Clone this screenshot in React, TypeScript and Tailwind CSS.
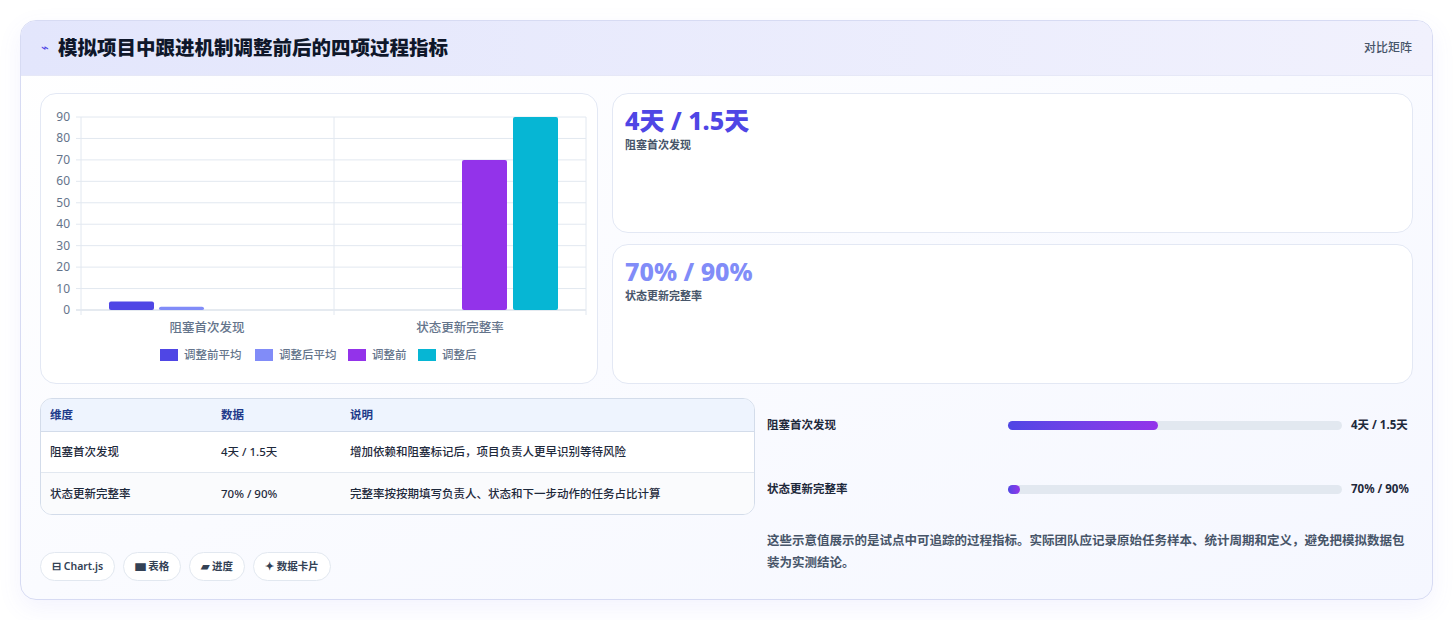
const font = { fontFamily: '"Noto Sans", "Noto Sans CJK SC", sans-serif' };

const ticks = [0, 10, 20, 30, 40, 50, 60, 70, 80, 90];
const y = (v: number) => 216 - (v / 90) * 193;

const bars = [
  { x: 68, v: 4, c: "#4f46e5" },
  { x: 118, v: 1.5, c: "#818cf8" },
  { x: 421, v: 70, c: "#9333ea" },
  { x: 472, v: 90, c: "#06b6d4" },
];

const legend = [
  { l: "调整前平均", c: "#4f46e5", x: 119 },
  { l: "调整后平均", c: "#818cf8", x: 214 },
  { l: "调整前", c: "#9333ea", x: 307 },
  { l: "调整后", c: "#06b6d4", x: 377 },
];

const Chart = () => (
  <svg width="557" height="290" className="block">
    {ticks.map((t) => (
      <g key={t}>
        <line x1="35" x2="545" y1={y(t)} y2={y(t)} stroke={t === 0 ? "#cbd5e1" : "#e2e8f0"} />
        <text x="29" y={y(t) + 4} textAnchor="end" fontSize="12" fill="#64748b">{t}</text>
      </g>
    ))}
    <line x1="40" x2="40" y1="23" y2="221" stroke="#e2e8f0" />
    <line x1="293" x2="293" y1="23" y2="221" stroke="#e2e8f0" />
    <line x1="545" x2="545" y1="23" y2="221" stroke="#e2e8f0" />
    {bars.map((b, i) => (
      <rect key={i} x={b.x} y={y(b.v)} width="45" height={216 - y(b.v)} rx="2" fill={b.c} />
    ))}
    <text x="166" y="238" textAnchor="middle" fontSize="12.5" fontWeight="500" fill="#64748b">阻塞首次发现</text>
    <text x="419" y="238" textAnchor="middle" fontSize="12.5" fontWeight="500" fill="#64748b">状态更新完整率</text>
    {legend.map((g) => (
      <g key={g.l}>
        <rect x={g.x} y="255" width="18" height="12" fill={g.c} />
        <text x={g.x + 24} y="265" fontSize="11.5" fontWeight="500" fill="#64748b">{g.l}</text>
      </g>
    ))}
  </svg>
);

const Stat = ({ v, l, c }: { v: string; l: string; c: string }) => (
  <div className="flex-1 rounded-2xl border border-[#e3e8f4] bg-white px-[12px] py-[9px]">
    <div className={`text-[25px] font-extrabold leading-[34px] ${c}`}>{v}</div>
    <div className="text-[11px] font-semibold text-[#475569]">{l}</div>
  </div>
);

const rows = [
  ["阻塞首次发现", "4天 / 1.5天", "增加依赖和阻塞标记后，项目负责人更早识别等待风险"],
  ["状态更新完整率", "70% / 90%", "完整率按按期填写负责人、状态和下一步动作的任务占比计算"],
];

export default function App() {
  return (
    <div style={font} className="w-[1453px] h-[620px] bg-white pt-5 pl-5">
      <div className="w-[1413px] h-[580px] rounded-2xl border border-[#d7dbf3] bg-gradient-to-br from-white to-[#f5f7ff] overflow-hidden shadow-[0_8px_24px_rgba(99,102,241,0.08)]">
        <div className="h-[55px] flex items-center justify-between px-5 bg-gradient-to-r from-[#e3e6fc] to-[#f1f1fd] border-b border-[#e6e8f7]">
          <div className="flex items-center gap-[9px]">
            <span className="text-[13px] text-[#4f46e5]">⌁</span>
            <span className="text-[19.5px] font-extrabold text-[#0f172a]">模拟项目中跟进机制调整前后的四项过程指标</span>
          </div>
          <span className="text-[12px] font-medium text-[#475569]">对比矩阵</span>
        </div>
        <div className="px-[19px] pt-[17px]">
          <div className="flex gap-[14px] h-[291px]">
            <div className="w-[558px] rounded-2xl border border-[#e3e8f4] bg-white overflow-hidden">
              <Chart />
            </div>
            <div className="flex-1 flex flex-col gap-[11px]">
              <Stat v="4天 / 1.5天" l="阻塞首次发现" c="text-[#4f46e5]" />
              <Stat v="70% / 90%" l="状态更新完整率" c="text-[#818cf8]" />
            </div>
          </div>
          <div className="flex gap-[12px] mt-[14px]">
            <div className="w-[715px] shrink-0">
              <div className="rounded-xl border border-[#d3dcea] overflow-hidden bg-white text-[11.5px]">
                <div className="flex h-[33px] items-center bg-[#eef4fe] border-b border-[#d3dcea] font-semibold text-[#1e3a8a]">
                  <div className="w-[180px] pl-[9px]">维度</div>
                  <div className="w-[129px]">数据</div>
                  <div>说明</div>
                </div>
                {rows.map((r, i) => (
                  <div key={i} className={`flex h-[41px] items-center font-medium text-[#1e293b] ${i === 0 ? "border-b border-[#e2e8f0]" : "bg-[#fafbfd]"}`}>
                    <div className="w-[180px] pl-[9px]">{r[0]}</div>
                    <div className="w-[129px]">{r[1]}</div>
                    <div>{r[2]}</div>
                  </div>
                ))}
              </div>
              <div className="flex gap-2 mt-[37px]">
                {["⊟ Chart.js", "▆ 表格", "▰ 进度", "✦ 数据卡片"].map((t) => (
                  <span key={t} className="h-[29px] px-[11px] flex items-center rounded-full border border-[#e2e8f0] bg-white text-[10.5px] font-semibold text-[#334155]">{t}</span>
                ))}
              </div>
            </div>
            <div className="flex-1 text-[11.5px]">
              <div className="flex items-center h-[54px]">
                <span className="w-[241px] font-semibold text-[#1e293b]">阻塞首次发现</span>
                <div className="w-[334px] h-[9px] rounded-full bg-[#e2e8f0]">
                  <div className="h-full w-[45%] rounded-full bg-gradient-to-r from-[#4f46e5] to-[#9333ea]" />
                </div>
                <span className="ml-[9px] font-bold text-[#1e293b]">4天 / 1.5天</span>
              </div>
              <div className="flex items-center h-[54px] mt-[10px]">
                <span className="w-[241px] font-semibold text-[#1e293b]">状态更新完整率</span>
                <div className="w-[334px] h-[9px] rounded-full bg-[#e2e8f0]">
                  <div className="h-full w-[12px] rounded-full bg-gradient-to-r from-[#4f46e5] to-[#9333ea]" />
                </div>
                <span className="ml-[9px] font-bold text-[#1e293b]">70% / 90%</span>
              </div>
              <p className="mt-[14px] mr-[6px] text-[12.5px] leading-[22px] text-[#475569] font-semibold">
                这些示意值展示的是试点中可追踪的过程指标。实际团队应记录原始任务样本、统计周期和定义，避免把模拟数据包装为实测结论。
              </p>
            </div>
          </div>
        </div>
      </div>
    </div>
  );
}
